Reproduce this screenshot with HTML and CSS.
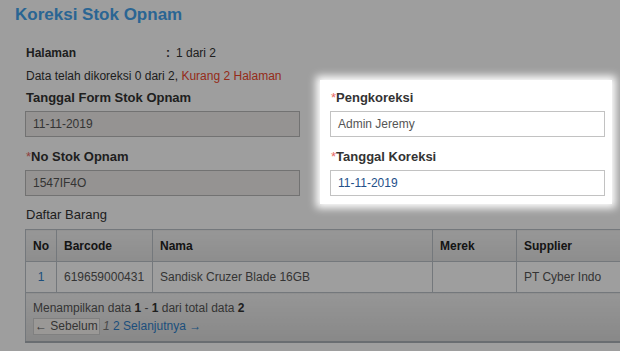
FILE: index.html
```html
<!DOCTYPE html>
<html lang="id">
<head>
<meta charset="utf-8">
<title>Koreksi Stok Opnam</title>
<link rel="stylesheet" href="styles.css">
</head>
<body>
<div class="page">
  <h1 class="title">Koreksi Stok Opnam</h1>
  <div class="info">
    <div class="info-row"><span class="info-label">Halaman</span><span class="info-colon">:</span><span>1 dari 2</span></div>
    <div class="info-row">Data telah dikoreksi 0 dari 2, <span class="warn">Kurang 2 Halaman</span></div>
  </div>
  <div class="form-grid">
    <div class="field">
      <label class="field-label">Tanggal Form Stok Opnam</label>
      <div class="input input-disabled">11-11-2019</div>
    </div>
    <div class="field">
      <label class="field-label"><span class="req">*</span>Pengkoreksi</label>
      <div class="input">Admin Jeremy</div>
    </div>
    <div class="field">
      <label class="field-label"><span class="req">*</span>No Stok Opnam</label>
      <div class="input input-disabled">1547IF4O</div>
    </div>
    <div class="field">
      <label class="field-label"><span class="req">*</span>Tanggal Koreksi</label>
      <div class="input input-date">11-11-2019</div>
    </div>
  </div>
  <div class="section-label">Daftar Barang</div>
  <div class="table-wrap">
    <table class="grid">
      <thead>
        <tr>
          <th class="c-no">No</th>
          <th class="c-bar">Barcode</th>
          <th class="c-nama">Nama</th>
          <th class="c-merek">Merek</th>
          <th class="c-sup">Supplier</th>
        </tr>
      </thead>
      <tbody>
        <tr>
          <td class="c-no"><span class="link">1</span></td>
          <td>619659000431</td>
          <td>Sandisk Cruzer Blade 16GB</td>
          <td></td>
          <td>PT Cyber Indo</td>
        </tr>
      </tbody>
      <tfoot>
        <tr>
          <td colspan="5" class="foot">
            <div>Menampilkan data <b>1</b> - <b>1</b> dari total data <b>2</b></div>
            <div class="pager"><span class="pbtn">← Sebelum</span> <i class="cur">1</i> <span class="link">2</span> <span class="link">Selanjutnya →</span></div>
          </td>
        </tr>
      </tfoot>
    </table>
  </div>
</div>
<div class="spotlight"></div>
</body>
</html>
```

FILE: styles.css
```css
html, body {
  margin: 0;
  padding: 0;
  overflow: hidden;
  background: #fff;
}
body {
  font-family: "Liberation Sans", Arial, sans-serif;
  color: #333;
  font-size: 12px;
  width: 620px;
  height: 351px;
  position: relative;
}
.page {
  padding: 0 0 0 25px;
}
.title {
  margin: 5px 0 0 -10px;
  font-size: 17px;
  line-height: 20px;
  font-weight: bold;
  color: #44a4ee;
}
.info {
  margin: 19px 0 0 1px;
}
.info-row {
  line-height: 18px;
  display: flex;
}
.info-row + .info-row {
  margin-top: 5px;
  display: block;
}
.info-label {
  width: 140px;
  font-weight: bold;
}
.info-colon {
  width: 10px;
  font-weight: bold;
}
.warn {
  color: #f0472c;
}
.form-grid {
  display: grid;
  grid-template-columns: 275px 275px;
  column-gap: 30px;
  row-gap: 11px;
  margin-top: 4px;
}
.field {
  display: flex;
  flex-direction: column;
  gap: 4px;
}
.field-label {
  font-size: 13px;
  font-weight: bold;
  line-height: 18px;
  padding-left: 1px;
}
.req {
  color: #e86a66;
  font-weight: normal;
}
.input {
  height: 26px;
  box-sizing: border-box;
  border: 1px solid #c2c2c2;
  padding: 0 7px;
  line-height: 24px;
  font-size: 12px;
  color: #555;
  background: #fff;
}
.input-disabled {
  background: #f1eeec;
  border-color: #b8b8b8;
}
.input-date {
  color: #23508a;
}
.section-label {
  margin-top: 10px;
  font-size: 13px;
  line-height: 18px;
  padding-left: 1px;
}
.table-wrap {
  margin-top: 5px;
  overflow: hidden;
}
.grid {
  border-collapse: collapse;
  width: 700px;
  table-layout: fixed;
}
.grid th, .grid td {
  border: 1px solid #bcc2c8;
  text-align: left;
  padding: 0 7px;
  font-size: 12px;
  white-space: nowrap;
}
.grid th {
  height: 31px;
  font-weight: bold;
  color: #222;
  background: linear-gradient(#f4f4f4, #e4e4e4);
}
.grid tbody td {
  height: 30px;
  color: #555;
}
.c-no { width: 16px; text-align: center !important; }
.c-bar { width: 81px; }
.c-nama { width: 265px; }
.c-merek { width: 69px; }
.c-sup { width: auto; }
.link {
  color: #2f7fc8;
}
.grid td.foot {
  height: 48px;
  padding: 0 7px;
  background: linear-gradient(#f2f2f2, #dcdcdc);
  border-bottom: 2px solid #aab0b6;
  color: #555;
  line-height: 17px;
  vertical-align: middle;
}
.foot b {
  color: #333;
}
.pager {
  margin-top: 1px;
}
.pbtn {
  display: inline-block;
  border: 1px solid #cfcfcf;
  background: #f9f6f3;
  line-height: 15px;
  padding: 0 1px;
  color: #555;
}
.cur {
  color: #777;
}
.spotlight {
  position: absolute;
  left: 320px;
  top: 80px;
  width: 292px;
  height: 124px;
  box-shadow: 0 0 8px 4px #fff, 0 0 0 2000px rgba(0, 0, 0, 0.38);
  pointer-events: none;
}
```
